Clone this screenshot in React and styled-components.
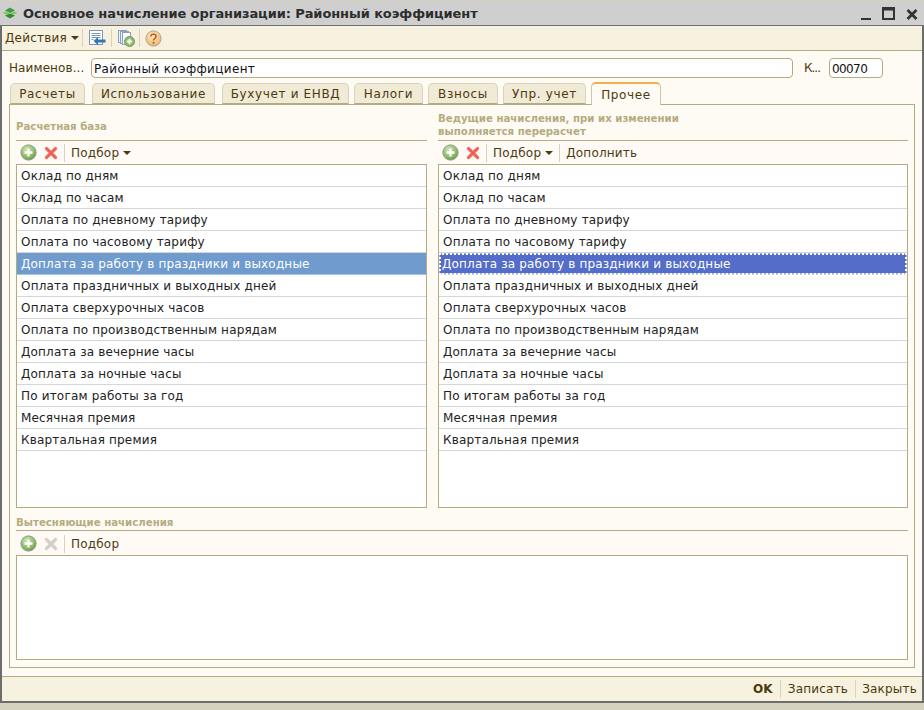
import React from "react";
import styled, { createGlobalStyle } from "styled-components";

const Global = createGlobalStyle`
  html, body { margin: 0; padding: 0; background: #d4d0c0; }
  #root { width: 924px; height: 710px; overflow: hidden; }
  * { box-sizing: border-box; }
`;

const Page = styled.div`
  width: 924px; height: 710px; display: flex; flex-direction: column;
  background: #d5d2bf; font-family: "DejaVu Sans", sans-serif; font-size: 12px; color: #4b3a10;
`;
const Win = styled.div`
  height: 702px; display: flex; flex-direction: column; margin-top: 1px;
  border-left: 2px solid #6d6d6d; border-right: 2px solid #6d6d6d; border-bottom: 2px solid #6d6d6d;
  background: #fefbf4;
`;
const TitleBar = styled.div`
  height: 25px; display: flex; align-items: center; background: #cfcfcf; border-bottom: 1px solid #6f6f6f;
  padding: 0 6px 0 2px; margin-left: -2px; margin-right: -2px;
`;
const Title = styled.div`
  margin-left: 5px; flex: 1; font: bold 13px "DejaVu Sans", sans-serif; color: #2d2d2d; letter-spacing: -0.09px; white-space: nowrap;
`;
const WinBtns = styled.div`display: flex; align-items: center; gap: 11px;`;
const MainBar = styled.div`
  height: 25px; display: flex; align-items: center; background: #f7f1df; border-bottom: 1px solid #b5ab7f; padding-left: 3px;
`;
const BarText = styled.span`
  white-space: nowrap; letter-spacing: 0.2px; color: #4b3a10; font-weight: ${p => (p.$bold ? 700 : 400)};
`;
const Caret = styled.span`
  display: inline-block; width: 0; height: 0; margin-left: 4px; vertical-align: 2px;
  border-left: 4px solid transparent; border-right: 4px solid transparent; border-top: 4px solid #4b3a10;
`;
const Sep = styled.span`
  width: 1px; height: 18px; background: #d8d2b8; margin: ${p => p.$m || "0 6px"}; flex: none;
`;
const Body = styled.div`flex: 1; display: flex; flex-direction: column; padding: 7px 7px 8px 7px; min-height: 0;`;
const NameRow = styled.div`display: flex; align-items: center; height: 20px; margin-bottom: 4px;`;
const Label = styled.span`width: ${p => p.$w}px; color: #4b3a10; white-space: nowrap; letter-spacing: ${p => p.$ls}px;`;
const Field = styled.div`
  height: 20px; width: ${p => p.$w}px; background: #fff; border: 1px solid #b5ab7f; border-radius: 4px;
  color: #111; padding: 3px 2px 0 2px; white-space: nowrap; letter-spacing: ${p => p.$ls}px; margin-right: ${p => p.$mr || 0}px;
`;
const Tabs = styled.div`display: flex; height: 22px; padding-left: 1px; position: relative; z-index: 1;`;
const Tab = styled.div`
  width: ${p => p.$w}px; margin-right: ${p => p.$mr}px; height: ${p => (p.$active ? 23 : 21)}px; margin-top: ${p => (p.$active ? 0 : 1)}px;
  display: flex; align-items: center; justify-content: center; white-space: nowrap; letter-spacing: 0.65px;
  background: ${p => (p.$active ? "#fefbf4" : "#f1ead6")};
  border: 1px solid ${p => (p.$active ? "#cfc79f" : "#d9d3b9")}; border-bottom: ${p => (p.$active ? "none" : "1px solid #b5ab7f")};
  border-top: ${p => (p.$active ? "2px solid #f0b050" : "1px solid #d9d3b9")};
  border-radius: 5px 5px 0 0;
`;
const Panel = styled.div`
  flex: 1; border: 1px solid #b5ab7f; padding: 0 6px 7px 6px; display: flex; flex-direction: column; min-height: 0;
`;
const Columns = styled.div`display: grid; grid-template-columns: 411px 470px; column-gap: 11px;`;
const Col = styled.div`display: flex; flex-direction: column;`;
const Heading = styled.div`
  height: 36px; display: flex; align-items: flex-end; padding-bottom: ${p => p.$pb}px; border-bottom: 1px solid #b5ab7f;
  font: bold 10.2px/13px "DejaVu Sans", sans-serif; color: #b5ab7f;
`;
const ToolBar = styled.div`
  height: 23px; display: flex; align-items: center; padding-left: 4px; background: #fffaf5;
`;
const IconSlot = styled.span`display: inline-flex; flex: none; margin-right: ${p => p.$mr || 0}px;`;
const List = styled.div`
  height: ${p => p.$h}px; background: #fff; border: 1px solid #b5ab7f; overflow: hidden;
`;
const Row = styled.div`
  height: 22px; display: flex; align-items: center; padding: 1px 0 0 4px; color: #222; white-space: nowrap; letter-spacing: 0.18px;
  border-bottom: 1px solid #d3d7d6;
  ${p => p.$sel === "soft" && "background: #6f9bcf; color: #fff; border-bottom-color: #a9c3e2;"}
  ${p => p.$sel === "focus" && "background: #546dc9; color: #fff; padding-left: 3px; outline: 2px dotted #fff; outline-offset: -2px; box-shadow: inset 0 0 0 1px #9fb0e6;"}
`;
const LowerHead = styled.div`
  height: 23px; display: flex; align-items: flex-end; padding-bottom: 1px; border-bottom: 1px solid #b5ab7f;
  font: bold 10.2px/13px "DejaVu Sans", sans-serif; color: #b5ab7f;
`;
const Lower = styled.div`display: flex; flex-direction: column;`;
const ToolBarTall = styled(ToolBar)`height: 24px; padding-top: 1px;`;
const Footer = styled.div`
  height: 25px; display: flex; align-items: center; justify-content: flex-end; padding-right: 5px;
  background: #f7f1df; border-top: 1px solid #b5ab7f;
`;

const Plus = () => (
  <svg width="17" height="17" viewBox="0 0 17 17">
    <defs>
      <radialGradient id="gp" cx="0.4" cy="0.3" r="0.8"><stop offset="0" stopColor="#cfe6b0" /><stop offset="0.6" stopColor="#8fbb68" /><stop offset="1" stopColor="#5f8f48" /></radialGradient>
    </defs>
    <circle cx="8.5" cy="8.5" r="7.6" fill="url(#gp)" stroke="#8a9a80" />
    <path d="M8.5 4.5v8M4.5 8.5h8" stroke="#fff" strokeWidth="2.4" />
  </svg>
);
const Cross = ({ off }) => (
  <svg width="14" height="14" viewBox="0 0 14 14">
    <path d="M2.5 2.5l9 9M11.5 2.5l-9 9" stroke={off ? "#d6cfc8" : "#f0796b"} strokeWidth="3.4" strokeLinecap="round" />
    {!off && <path d="M2.5 2.5l9 9M11.5 2.5l-9 9" stroke="#e85c4e" strokeWidth="1.4" strokeLinecap="round" />}
  </svg>
);
const DocArrow = () => (
  <svg width="17" height="16" viewBox="0 0 17 16">
    <rect x="0.5" y="0.5" width="13" height="14" fill="#fff" stroke="#7d94b8" />
    <path d="M2.5 3.500h9M2.500 5.500h9M2.500 7.500h9M2.500 9.500h2" stroke="#7d94b8" />
    <path d="M16.500 9.500H9V7l-4.500 4L9 15v-2.500h7.500z" fill="#2f78b8" />
  </svg>
);
const DocCopy = () => (
  <svg width="17" height="17" viewBox="0 0 17 17">
    <rect x="0.5" y="0.500" width="8" height="12" fill="#eef2f8" stroke="#8aa0bf" />
    <rect x="2.500" y="1.500" width="8" height="12" fill="#eef2f8" stroke="#8aa0bf" />
    <rect x="4.500" y="2.500" width="8" height="12" fill="#fff" stroke="#8aa0bf" />
    <circle cx="11.500" cy="11.500" r="5" fill="#8dbb6a" stroke="#6d9a54" />
    <path d="M11.500 8.800v5.400M8.800 11.500h5.400" stroke="#fff" strokeWidth="1.800" />
  </svg>
);
const Help = () => (
  <svg width="17" height="17" viewBox="0 0 17 17">
    <defs>
      <radialGradient id="gh" cx="0.45" cy="0.35" r="0.75"><stop offset="0" stopColor="#fdeccb" /><stop offset="0.7" stopColor="#f3bf7c" /><stop offset="1" stopColor="#d99c50" /></radialGradient>
    </defs>
    <circle cx="8.500" cy="8.500" r="7.600" fill="url(#gh)" stroke="#a8a79b" />
    <path d="M6 6.500c0-3 5-3 5 0 0 2-2.500 2-2.500 4" fill="none" stroke="#c05a20" strokeWidth="1.600" />
    <circle cx="8.500" cy="12.800" r="1" fill="#c05a20" />
  </svg>
);
const Logo = () => (
  <svg width="16" height="12" viewBox="0 0 16 12">
    <path d="M8 0.500L13 3.500 8 6 3 3.500z" fill="#3f9a4a" />
    <path d="M0.500 6L4 4.500 8 6.500l4-2L15.500 6 8 9z" fill="#84c85a" />
    <path d="M3 8.500L8 6.800l5 1.700L8 11.500z" fill="#2f8a3c" />
  </svg>
);
const WinMin = () => (
  <svg width="10" height="16" viewBox="0 0 10 16"><rect x="0" y="13" width="10" height="2" fill="#333" /></svg>
);
const WinMax = () => (
  <svg width="13" height="13" viewBox="0 0 13 13"><path d="M0 0h13v13H0zM2 3.500v7.500h9V3.500z" fill="#333" fillRule="evenodd" /></svg>
);
const WinClose = () => (
  <svg width="12" height="11" viewBox="0 0 12 11" style={{ marginTop: 2 }}><path d="M1.500 1l9 9M10.500 1l-9 9" stroke="#333" strokeWidth="2.800" /></svg>
);

const TABS = [
  ["Расчеты", 75, 7], ["Использование", 123, 7], ["Бухучет и ЕНВД", 127, 5], ["Налоги", 69, 5],
  ["Взносы", 70, 5], ["Упр. учет", 83, 5], ["Прочее", 70, 0],
];
const ITEMS = [
  "Оклад по дням", "Оклад по часам", "Оплата по дневному тарифу", "Оплата по часовому тарифу",
  "Доплата за работу в праздники и выходные", "Оплата праздничных и выходных дней", "Оплата сверхурочных часов",
  "Оплата по производственным нарядам", "Доплата за вечерние часы", "Доплата за ночные часы",
  "По итогам работы за год", "Месячная премия", "Квартальная премия",
];

const Items = ({ sel }) => ITEMS.map((t, i) => <Row key={t} $sel={i === 4 ? sel : undefined}>{t}</Row>);

export default function App() {
  return (
    <Page>
      <Global />
      <Win>
        <TitleBar>
          <Logo />
          <Title>Основное начисление организации: Районный коэффициент</Title>
          <WinBtns><WinMin /><WinMax /><WinClose /></WinBtns>
        </TitleBar>
        <MainBar>
          <BarText>Действия</BarText><Caret />
          <Sep $m="0 6px 0 3px" />
          <IconSlot><DocArrow /></IconSlot>
          <Sep $m="0 6px 0 5px" />
          <IconSlot><DocCopy /></IconSlot>
          <Sep $m="0 5px 0 4px" />
          <IconSlot><Help /></IconSlot>
        </MainBar>
        <Body>
          <NameRow>
            <Label $w={82} $ls={0.1}>Наименов...</Label>
            <Field $w={702} $mr={11} $ls={0.35}>Районный коэффициент</Field>
            <Label $w={25} $ls={-1}>К...</Label>
            <Field $w={54} $ls={-0.6}>00070</Field>
          </NameRow>
          <Tabs>
            {TABS.map(([t, w, mr]) => <Tab key={t} $w={w} $mr={mr} $active={t === "Прочее"}>{t}</Tab>)}
          </Tabs>
          <Panel>
            <Columns>
              <Col>
                <Heading $pb={7}>Расчетная база</Heading>
                <ToolBar>
                  <IconSlot $mr={7}><Plus /></IconSlot>
                  <IconSlot><Cross /></IconSlot>
                  <Sep $m="0 6px 0 6px" />
                  <BarText>Подбор</BarText><Caret />
                </ToolBar>
                <List $h={344}><Items sel="soft" /></List>
              </Col>
              <Col>
                <Heading $pb={2}>Ведущие начисления, при их изменении<br />выполняется перерасчет</Heading>
                <ToolBar>
                  <IconSlot $mr={7}><Plus /></IconSlot>
                  <IconSlot><Cross /></IconSlot>
                  <Sep $m="0 6px 0 6px" />
                  <BarText>Подбор</BarText><Caret />
                  <Sep $m="0 6px 0 6px" />
                  <BarText>Дополнить</BarText>
                </ToolBar>
                <List $h={344}><Items sel="focus" /></List>
              </Col>
            </Columns>
            <Lower>
              <LowerHead>Вытесняющие начисления</LowerHead>
              <ToolBarTall>
                <IconSlot $mr={7}><Plus /></IconSlot>
                <IconSlot><Cross off /></IconSlot>
                <Sep $m="0 6px 0 6px" />
                <BarText>Подбор</BarText>
              </ToolBarTall>
              <List $h={105} />
            </Lower>
          </Panel>
        </Body>
        <Footer>
          <BarText $bold>OK</BarText>
          <Sep $m="0 7px 0 7px" />
          <BarText>Записать</BarText>
          <Sep $m="0 6px 0 7px" />
          <BarText>Закрыть</BarText>
        </Footer>
      </Win>
    </Page>
  );
}
